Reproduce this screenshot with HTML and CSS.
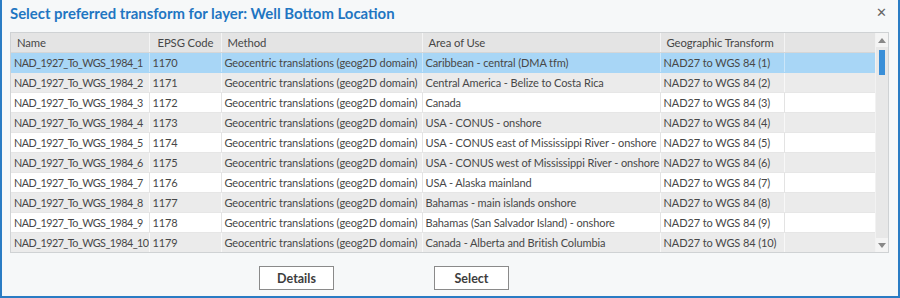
FILE: index.html
```html
<!DOCTYPE html>
<html lang="en">
<head>
    <meta charset="UTF-8">
    <title>Select preferred transform</title>
    <link rel="stylesheet" href="styles.css">
</head>
<body>
    <div class="dialog">
        <div class="title-bar">
            <h2>Select preferred transform for layer: Well Bottom Location</h2>
            <span class="close-btn">&#x2715;</span>
        </div>

        <div class="grid">
            <div class="grid-body">
                <table class="transform-table">
                    <colgroup>
                        <col class="col-name">
                        <col class="col-epsg">
                        <col class="col-method">
                        <col class="col-area">
                        <col class="col-geo">
                        <col>
                    </colgroup>
                    <thead>
                        <tr>
                            <th>Name</th>
                            <th>EPSG Code</th>
                            <th>Method</th>
                            <th>Area of Use</th>
                            <th>Geographic Transform</th>
                            <th></th>
                        </tr>
                    </thead>
                    <tbody>
                        <tr class="selected">
                            <td>NAD_1927_To_WGS_1984_1</td><td>1170</td><td>Geocentric translations (geog2D domain)</td><td>Caribbean - central (DMA tfm)</td><td>NAD27 to WGS 84 (1)</td><td></td>
                        </tr>
                        <tr>
                            <td>NAD_1927_To_WGS_1984_2</td><td>1171</td><td>Geocentric translations (geog2D domain)</td><td>Central America - Belize to Costa Rica</td><td>NAD27 to WGS 84 (2)</td><td></td>
                        </tr>
                        <tr>
                            <td>NAD_1927_To_WGS_1984_3</td><td>1172</td><td>Geocentric translations (geog2D domain)</td><td>Canada</td><td>NAD27 to WGS 84 (3)</td><td></td>
                        </tr>
                        <tr>
                            <td>NAD_1927_To_WGS_1984_4</td><td>1173</td><td>Geocentric translations (geog2D domain)</td><td>USA - CONUS - onshore</td><td>NAD27 to WGS 84 (4)</td><td></td>
                        </tr>
                        <tr>
                            <td>NAD_1927_To_WGS_1984_5</td><td>1174</td><td>Geocentric translations (geog2D domain)</td><td>USA - CONUS east of Mississippi River - onshore</td><td>NAD27 to WGS 84 (5)</td><td></td>
                        </tr>
                        <tr>
                            <td>NAD_1927_To_WGS_1984_6</td><td>1175</td><td>Geocentric translations (geog2D domain)</td><td>USA - CONUS west of Mississippi River - onshore</td><td>NAD27 to WGS 84 (6)</td><td></td>
                        </tr>
                        <tr>
                            <td>NAD_1927_To_WGS_1984_7</td><td>1176</td><td>Geocentric translations (geog2D domain)</td><td>USA - Alaska mainland</td><td>NAD27 to WGS 84 (7)</td><td></td>
                        </tr>
                        <tr>
                            <td>NAD_1927_To_WGS_1984_8</td><td>1177</td><td>Geocentric translations (geog2D domain)</td><td>Bahamas - main islands onshore</td><td>NAD27 to WGS 84 (8)</td><td></td>
                        </tr>
                        <tr>
                            <td>NAD_1927_To_WGS_1984_9</td><td>1178</td><td>Geocentric translations (geog2D domain)</td><td>Bahamas (San Salvador Island) - onshore</td><td>NAD27 to WGS 84 (9)</td><td></td>
                        </tr>
                        <tr>
                            <td>NAD_1927_To_WGS_1984_10</td><td>1179</td><td>Geocentric translations (geog2D domain)</td><td>Canada - Alberta and British Columbia</td><td>NAD27 to WGS 84 (10)</td><td></td>
                        </tr>
                    </tbody>
                </table>
            </div>
            <div class="scrollbar">
                <span class="arrow up"></span>
                <div class="track"><div class="thumb"></div></div>
                <span class="arrow down"></span>
            </div>
        </div>

        <div class="button-row">
            <button class="dlg-btn">Details</button>
            <button class="dlg-btn">Select</button>
        </div>
    </div>
</body>
</html>
```

FILE: styles.css
```css
body {
    margin: 0;
    font-family: Lato, "Noto Sans", Arial, sans-serif;
    background: #ffffff;
}

.dialog {
    width: 900px;
    height: 298px;
    box-sizing: border-box;
    background: #f6f8f9;
    border-left: 2px solid #2a7cc4;
    border-right: 2px solid #2a7cc4;
    border-bottom: 2px solid #2a7cc4;
    padding: 0 9px 0 8px;
}

.title-bar {
    height: 32px;
    display: flex;
    align-items: center;
    justify-content: space-between;
}

.title-bar h2 {
    margin: 0;
    margin-top: -6px;
    font-size: 14.9px;
    font-weight: 700;
    color: #1f76c2;
}

.close-btn {
    color: #666;
    font-family: "DejaVu Sans", sans-serif;
    font-size: 13px;
    margin-top: -8px;
    margin-right: 2px;
}

.grid {
    display: flex;
    height: 219px;
    border: 1px solid #cfd2d4;
    background: #ffffff;
    overflow: hidden;
}

.grid-body {
    width: 866px;
    overflow: hidden;
}

.transform-table {
    width: 866px;
    table-layout: fixed;
    border-collapse: collapse;
    font-size: 11px;
    letter-spacing: -0.1px;
    color: #474747;
}

.col-name { width: 138px; }
.col-epsg { width: 72px; }
.col-method { width: 201px; }
.col-area { width: 238px; }
.col-geo { width: 124px; }

.transform-table th {
    height: 19px;
    padding: 0 0 0 6px;
    background: #e4e4e4;
    font-weight: 400;
    font-size: 11.3px;
    text-align: left;
    border-right: 1px solid #f4f4f4;
    border-bottom: 1px solid #d6d6d6;
    white-space: nowrap;
}

.transform-table th:nth-child(2) { padding-left: 8px; }

.transform-table td {
    height: 19px;
    padding: 0 0 0 3px;
    border-right: 1px solid #e3e3e3;
    border-bottom: 1px solid #e6e6e6;
    white-space: nowrap;
    overflow: hidden;
}

.transform-table td:first-child {
    font-size: 10.8px;
    letter-spacing: -0.55px;
}

.transform-table tbody tr:nth-child(even) td {
    background: #ebebeb;
    border-right-color: #f8f8f8;
}

.transform-table tbody tr.selected td {
    background: #a8d6f6;
    border-right-color: #cbe6f9;
    border-bottom-color: #a8d6f6;
}

.transform-table td:last-child,
.transform-table th:last-child {
    border-right: none;
}

.scrollbar {
    width: 12px;
    display: flex;
    flex-direction: column;
    background: #e8e8e8;
    border-left: 1px solid #f2f2f2;
}

.arrow {
    height: 14px;
    display: flex;
    align-items: center;
    justify-content: center;
    background: #f4f4f4;
}

.arrow::before {
    content: "";
    border-left: 4px solid transparent;
    border-right: 4px solid transparent;
}

.arrow.up::before { border-bottom: 5px solid #888; }
.arrow.down::before { border-top: 5px solid #888; }

.track {
    flex: 1;
    padding: 3px 3px 0 3px;
}

.thumb {
    height: 25px;
    background: #3a8fd8;
}

.button-row {
    display: flex;
    gap: 100px;
    padding-left: 249px;
    margin-top: 13px;
}

.dlg-btn {
    width: 75px;
    height: 24px;
    background: #ffffff;
    border: 1px solid #8a8a8a;
    font-family: Lato, "Noto Sans", Arial, sans-serif;
    font-size: 12.5px;
    font-weight: 700;
    color: #3d3d3d;
    padding: 0;
}
```
